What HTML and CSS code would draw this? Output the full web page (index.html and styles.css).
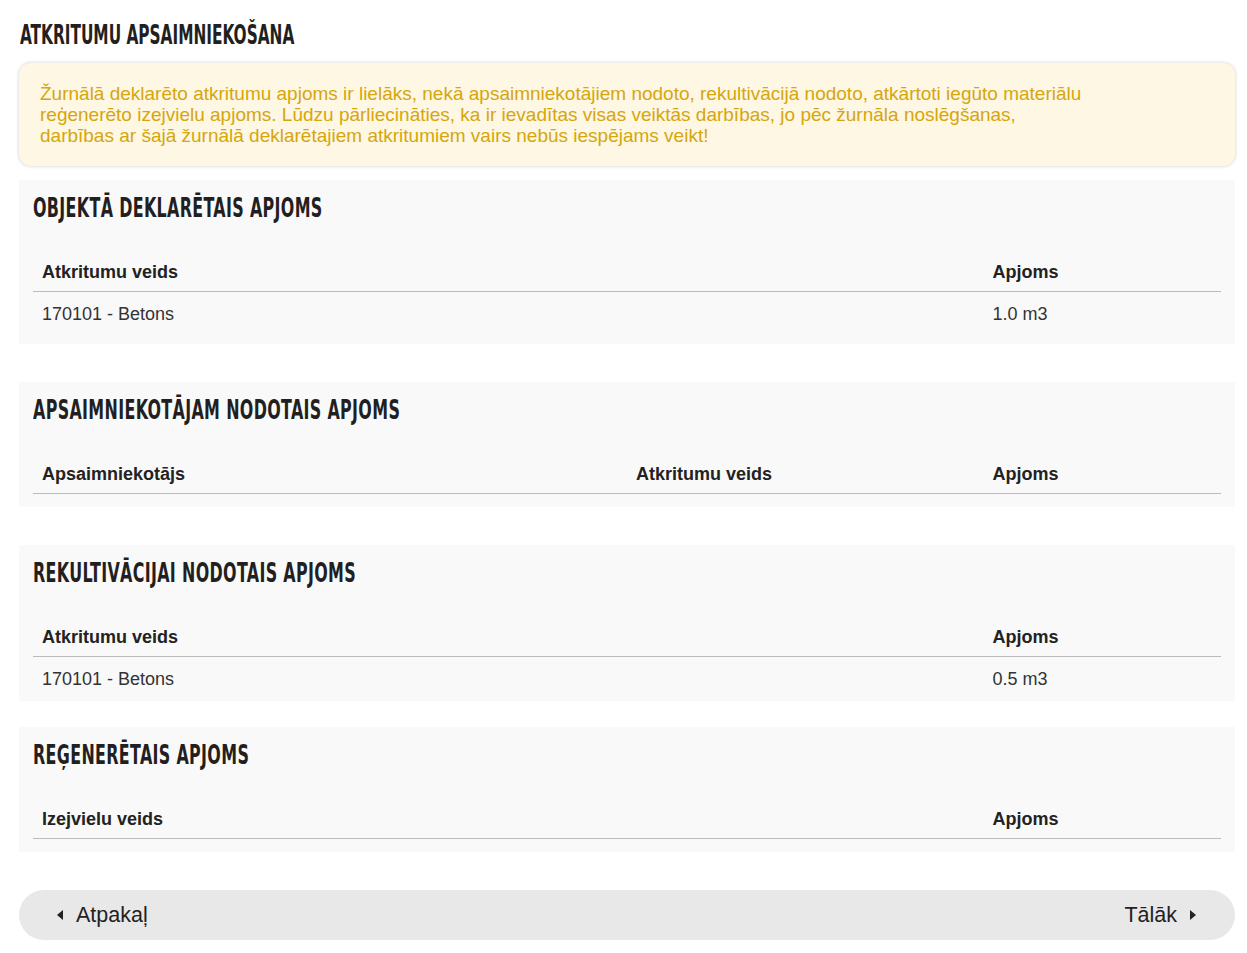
FILE: index.html
```html
<!DOCTYPE html>
<html>
<head>
    <title>Atkritumu apsaimniekošana</title>
    <meta charset="utf-8">
    <meta name="viewport" content="width=device-width, initial-scale=1">
    <link rel="stylesheet" href="styles.css">
</head>
<body>
    <div class="page">
        <h1 class="title"><span>Atkritumu apsaimniekošana</span></h1>

        <div class="alert">
            Žurnālā deklarēto atkritumu apjoms ir lielāks, nekā apsaimniekotājiem nodoto, rekultivācijā nodoto, atkārtoti iegūto materiālu<br>
            reģenerēto izejvielu apjoms. Lūdzu pārliecināties, ka ir ievadītas visas veiktās darbības, jo pēc žurnāla noslēgšanas,<br>
            darbības ar šajā žurnālā deklarētajiem atkritumiem vairs nebūs iespējams veikt!
        </div>

        <div class="block">
            <h2 class="block-title"><span>Objektā deklarētais apjoms</span></h2>
            <table class="data">
                <thead>
                    <tr><th class="col-main">Atkritumu veids</th><th class="col-amount">Apjoms</th></tr>
                </thead>
                <tbody>
                    <tr><td>170101 - Betons</td><td>1.0 m3</td></tr>
                </tbody>
            </table>
        </div>

        <div class="block">
            <h2 class="block-title"><span>Apsaimniekotājam nodotais apjoms</span></h2>
            <table class="data">
                <thead>
                    <tr><th class="col-half">Apsaimniekotājs</th><th class="col-type">Atkritumu veids</th><th class="col-amount">Apjoms</th></tr>
                </thead>
                <tbody></tbody>
            </table>
        </div>

        <div class="block block-tight">
            <h2 class="block-title"><span>Rekultivācijai nodotais apjoms</span></h2>
            <table class="data">
                <thead>
                    <tr><th class="col-main">Atkritumu veids</th><th class="col-amount">Apjoms</th></tr>
                </thead>
                <tbody>
                    <tr><td>170101 - Betons</td><td>0.5 m3</td></tr>
                </tbody>
            </table>
        </div>

        <div class="block">
            <h2 class="block-title"><span>Reģenerētais apjoms</span></h2>
            <table class="data">
                <thead>
                    <tr><th class="col-main">Izejvielu veids</th><th class="col-amount">Apjoms</th></tr>
                </thead>
                <tbody></tbody>
            </table>
        </div>

        <nav class="pager">
            <a class="pager-link" href="#">
                <svg width="8" height="12" viewBox="0 0 8 12"><path d="M7 1 L1 6 L7 11 Z" fill="#222"/></svg>
                Atpakaļ
            </a>
            <a class="pager-link" href="#">
                Tālāk
                <svg width="8" height="12" viewBox="0 0 8 12"><path d="M1 1 L7 6 L1 11 Z" fill="#222"/></svg>
            </a>
        </nav>
    </div>
</body>
</html>
```

FILE: styles.css
```css
body {
    margin: 0;
    background: #fff;
    font-family: "Liberation Sans", Arial, sans-serif;
    color: #333;
}
.page {
    width: 1216px;
    padding: 20px 0 0 19px;
}
.title,
.block-title {
    margin: 0;
    font-family: "DejaVu Sans Condensed", sans-serif;
    font-weight: bold;
    font-size: 26px;
    line-height: 30px;
    text-transform: uppercase;
    color: #231f20;
    white-space: nowrap;
}
.title span,
.block-title span {
    display: inline-block;
    transform-origin: left center;
}
.title {
    margin-left: 1px;
    margin-bottom: 13px;
}
.title span {
    transform: scaleX(0.656);
}
.block-title span {
    letter-spacing: 0.5px;
    transform: scaleX(0.68);
}
.alert {
    background: #fdf7e4;
    color: #d6a60c;
    font-size: 19px;
    line-height: 21px;
    padding: 20px 21px 20px;
    border-radius: 12px;
    box-shadow: 0 0 3px 1px rgba(0, 0, 0, 0.12);
    margin-bottom: 14px;
}
.block {
    background: #f9f9f9;
    padding: 13px 14px 13px;
    margin-bottom: 38px;
}
.block-tight {
    padding-bottom: 5px;
    margin-bottom: 26px;
}
.block-title {
    margin-bottom: 27px;
}
.data {
    width: 100%;
    border-collapse: collapse;
    font-size: 18px;
    line-height: 22px;
}
.data th {
    text-align: left;
    font-weight: bold;
    color: #222;
    padding: 11px 9px 8px;
    border-bottom: 1px solid #bbb;
}
.data td {
    padding: 11px 9px 6px;
}
.col-main {
    width: 80%;
}
.col-half {
    width: 50%;
}
.col-type {
    width: 30%;
}
.col-amount {
    width: 20%;
}
.pager {
    display: flex;
    justify-content: space-between;
    align-items: center;
    height: 50px;
    padding: 0 38px 0 37px;
    background: #e8e8e8;
    border-radius: 25px;
    margin-bottom: 13px;
}
.pager-link {
    display: flex;
    align-items: center;
    gap: 12px;
    font-size: 21.5px;
    color: #222;
    text-decoration: none;
}
```
